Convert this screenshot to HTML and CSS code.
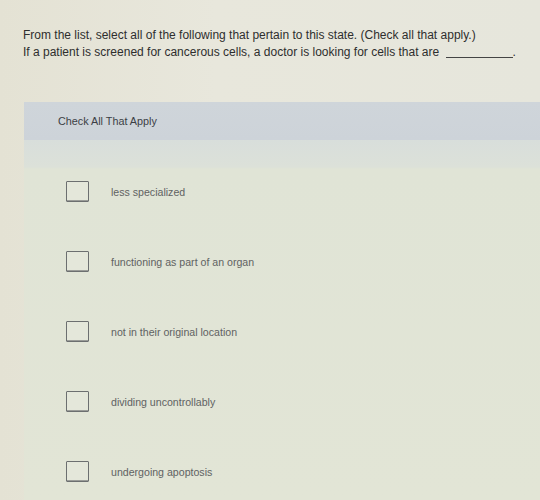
FILE: index.html
```html
<!DOCTYPE html>
<html>
<head>
<meta charset="utf-8">
<link rel="stylesheet" href="styles.css">
</head>
<body>
<div class="page">
  <div class="prompt">
    <p class="line">From the list, select all of the following that pertain to this state. (Check all that apply.)</p>
    <p class="line">If a patient is screened for cancerous cells, a doctor is looking for cells that are <span class="blank"></span>.</p>
  </div>
  <div class="panel">
    <div class="panel-head">Check All That Apply</div>
    <div class="panel-body">
      <ul class="options">
        <li class="option"><span class="box"></span><span class="label">less specialized</span></li>
        <li class="option"><span class="box"></span><span class="label">functioning as part of an organ</span></li>
        <li class="option"><span class="box"></span><span class="label">not in their original location</span></li>
        <li class="option"><span class="box"></span><span class="label">dividing uncontrollably</span></li>
        <li class="option"><span class="box"></span><span class="label">undergoing apoptosis</span></li>
      </ul>
    </div>
  </div>
</div>
</body>
</html>
```
FILE: styles.css
```css
html, body {
  margin: 0;
  padding: 0;
}
body {
  width: 540px;
  height: 500px;
  overflow: hidden;
  background: linear-gradient(90deg, #e4e2d4 0%, #e8e7dc 40%, #e6e6dc 100%);
  font-family: "Liberation Sans", Arial, sans-serif;
}
.page {
  padding: 27px 0 0 23px;
}
.prompt .line {
  margin: 0;
  font-size: 12px;
  line-height: 17px;
  color: #2e2e2e;
  white-space: nowrap;
}
.blank {
  display: inline-block;
  width: 67px;
  border-bottom: 1px solid #444;
  margin-left: 3px;
  vertical-align: -2px;
}
.panel {
  margin-top: 41px;
  margin-left: 1px;
  background: #dfe3d8;
}
.panel-head {
  height: 38px;
  background: linear-gradient(180deg, #cfd5da 0%, #cdd3d9 100%);
  padding-left: 34px;
  font-size: 10.8px;
  line-height: 38px;
  color: #3c3f45;
}
.panel-body {
  box-sizing: border-box;
  height: 360px;
  background: linear-gradient(180deg, #d8dedb 0px, #dce1d9 27px, #e0e4d6 29px, #e2e5d6 100%);
  padding-top: 41px;
  padding-left: 42px;
}
.options {
  list-style: none;
  margin: 0;
  padding: 0;
  display: flex;
  flex-direction: column;
  gap: 49px;
}
.option {
  display: flex;
  align-items: center;
  height: 21px;
}
.box {
  box-sizing: border-box;
  width: 23px;
  height: 21px;
  border: 1.5px solid #6c6f70;
  border-radius: 1px;
  background: #e4e7da;
  box-shadow: inset 0 -1px 0 #9a9c98;
}
.label {
  margin-left: 22px;
  font-size: 10.6px;
  color: #606262;
}
```
